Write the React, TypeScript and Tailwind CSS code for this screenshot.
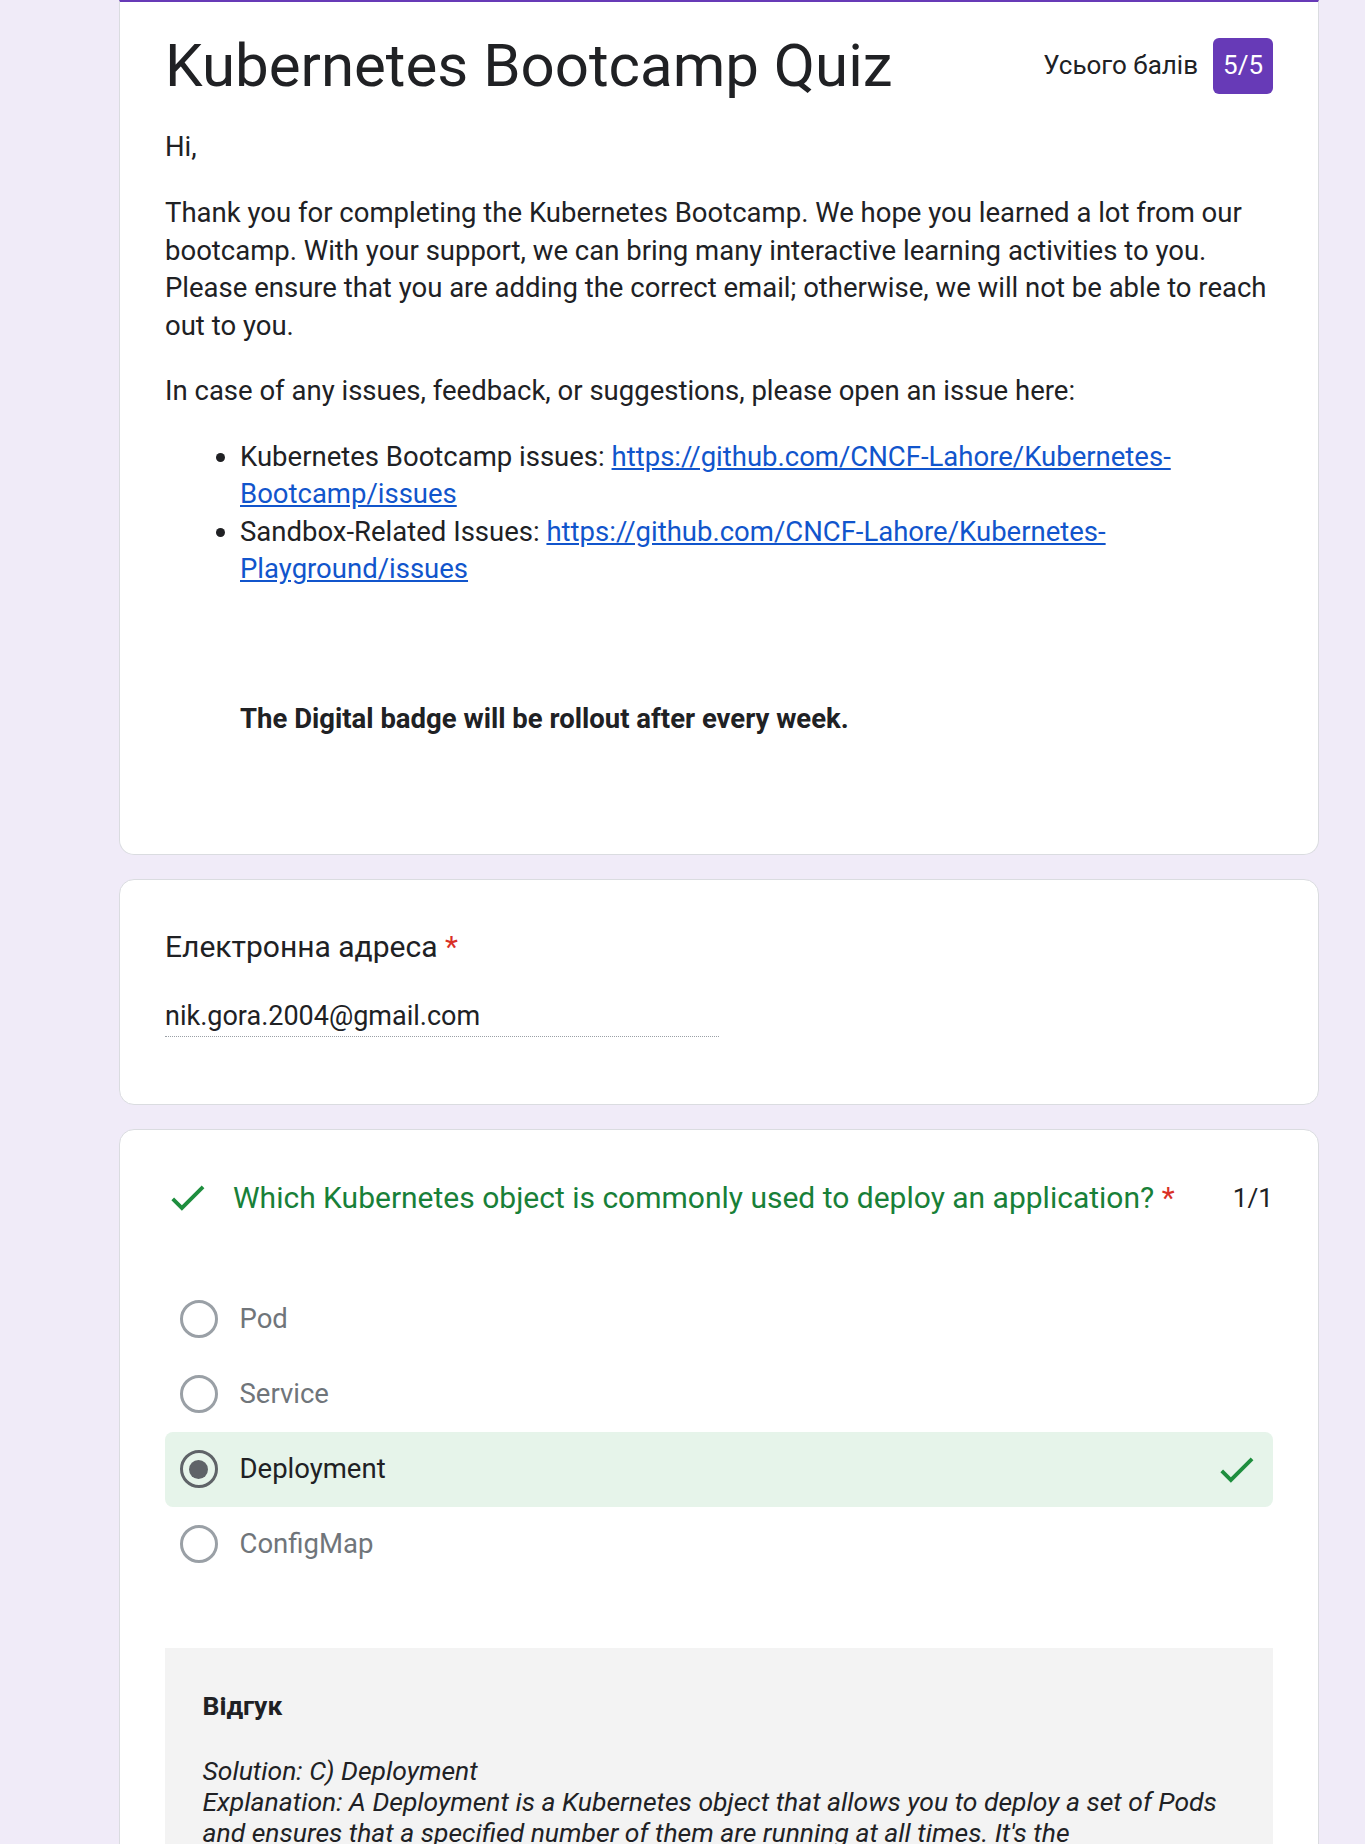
import React from "react";

const CheckIcon = ({ className }: { className?: string }) => (
  <svg viewBox="0 0 24 24" className={className} fill="currentColor" aria-hidden="true">
    <path d="M9 16.17L4.83 12l-1.42 1.41L9 19 21 7l-1.41-1.41z" />
  </svg>
);

const Radio = ({ checked }: { checked?: boolean }) => (
  <div
    className={
      checked
        ? "w-[37.5px] h-[37.5px] rounded-full border-[3.75px] border-[#5f6368] flex items-center justify-center shrink-0"
        : "w-[37.5px] h-[37.5px] rounded-full border-[3.75px] border-[#9aa0a6] shrink-0"
    }
  >
    {checked && <div className="w-[19px] h-[19px] rounded-full bg-[#5f6368]" />}
  </div>
);

const Option = ({ label, checked }: { label: string; checked?: boolean }) => (
  <div
    className={
      checked
        ? "h-[75px] flex items-center pl-[15px] pr-[14px] rounded-[8px] bg-[#e6f4ea]"
        : "h-[75px] flex items-center pl-[15px] pr-[14px]"
    }
  >
    <Radio checked={checked} />
    <span
      className={
        checked
          ? "ml-[22px] text-[27.5px] text-[#202124] flex-1"
          : "ml-[22px] text-[27.5px] text-[#70757a] flex-1"
      }
    >
      {label}
    </span>
    {checked && <CheckIcon className="w-[45px] h-[45px] text-[#1e8e3e]" />}
  </div>
);

export default function App() {
  return (
    <div className="h-[1844px] overflow-hidden bg-[#f0ebf8] font-['Roboto',sans-serif] text-[#202124]">
      <div className="ml-[119px] w-[1200px] flex flex-col gap-[24px]">
        {/* Card 1 */}
        <div className="bg-white border border-[#dadce0] border-t-[2px] border-t-[#673ab7] rounded-b-[15px] px-[45px] pt-[26px] pb-[117px]">
          <div className="flex items-center justify-between">
            <h1 className="text-[60px] leading-[75px] font-normal">Kubernetes Bootcamp Quiz</h1>
            <div className="flex items-center gap-[15px]">
              <span className="text-[26px] leading-[37.5px]">Усього балів</span>
              <span className="h-[56px] px-[10px] rounded-[6px] bg-[#673ab7] text-white text-[26px] flex items-center">
                5/5
              </span>
            </div>
          </div>
          <div className="text-[27.5px] leading-[37.5px] mt-[25px]">
            <p>Hi,</p>
            <p className="mt-[28.5px]">
              Thank you for completing the Kubernetes Bootcamp. We hope you learned a lot from our
              <br />
              bootcamp. With your support, we can bring many interactive learning activities to you.
              <br />
              Please ensure that you are adding the correct email; otherwise, we will not be able to reach
              <br />
              out to you.
            </p>
            <p className="mt-[28px]">
              In case of any issues, feedback, or suggestions, please open an issue here:
            </p>
            <ul className="mt-[28px] pl-[75px] list-disc marker:text-[#202124]">
              <li>
                Kubernetes Bootcamp issues:{" "}
                <a className="text-[#1155cc] underline" href="#">
                  https://github.com/CNCF-Lahore/Kubernetes-
                  <br />
                  Bootcamp/issues
                </a>
              </li>
              <li>
                Sandbox-Related Issues:{" "}
                <a className="text-[#1155cc] underline" href="#">
                  https://github.com/CNCF-Lahore/Kubernetes-
                  <br />
                  Playground/issues
                </a>
              </li>
            </ul>
            <p className="mt-[112px] pl-[75px] font-bold">
              The Digital badge will be rollout after every week.
            </p>
          </div>
        </div>

        {/* Card 2 */}
        <div className="bg-white border border-[#dadce0] rounded-[15px] px-[45px] pt-[44px] pb-[67px]">
          <div className="text-[30px] leading-[45px]">
            Електронна адреса <span className="text-[#d93025]">*</span>
          </div>
          <div className="mt-[29px] w-[554px] text-[27px] leading-[37.5px] border-b border-dotted border-[#9aa0a6]">
            nik.gora.2004@gmail.com
          </div>
        </div>

        {/* Card 3 */}
        <div className="bg-white border border-[#dadce0] rounded-t-[15px] px-[45px] pt-[44px] pb-[60px]">
          <div className="flex items-center">
            <CheckIcon className="w-[45px] h-[45px] text-[#1e8e3e] shrink-0" />
            <div className="ml-[23px] flex-1 text-[30px] leading-[45px] text-[#188038]">
              Which Kubernetes object is commonly used to deploy an application?{" "}
              <span className="text-[#d93025]">*</span>
            </div>
            <div className="text-[26.25px] leading-[45px] pt-[2px]">1/1</div>
          </div>
          <div className="mt-[61px] flex flex-col">
            <Option label="Pod" />
            <Option label="Service" />
            <Option label="Deployment" checked />
            <Option label="ConfigMap" />
          </div>
          <div className="mt-[66px] bg-[#f3f3f3] px-[37.5px] pt-[39px] pb-[40px]">
            <div className="text-[26.5px] leading-[37.5px] font-bold">Відгук</div>
            <div className="mt-[31px] text-[26.5px] italic leading-[31px]">
              <div>Solution: C) Deployment</div>
              <div>Explanation: A Deployment is a Kubernetes object that allows you to deploy a set of Pods</div>
              <div>and ensures that a specified number of them are running at all times. It's the</div>
              <div>recommended way to deploy and manage stateless applications in Kubernetes.</div>
            </div>
          </div>
        </div>
      </div>
    </div>
  );
}
